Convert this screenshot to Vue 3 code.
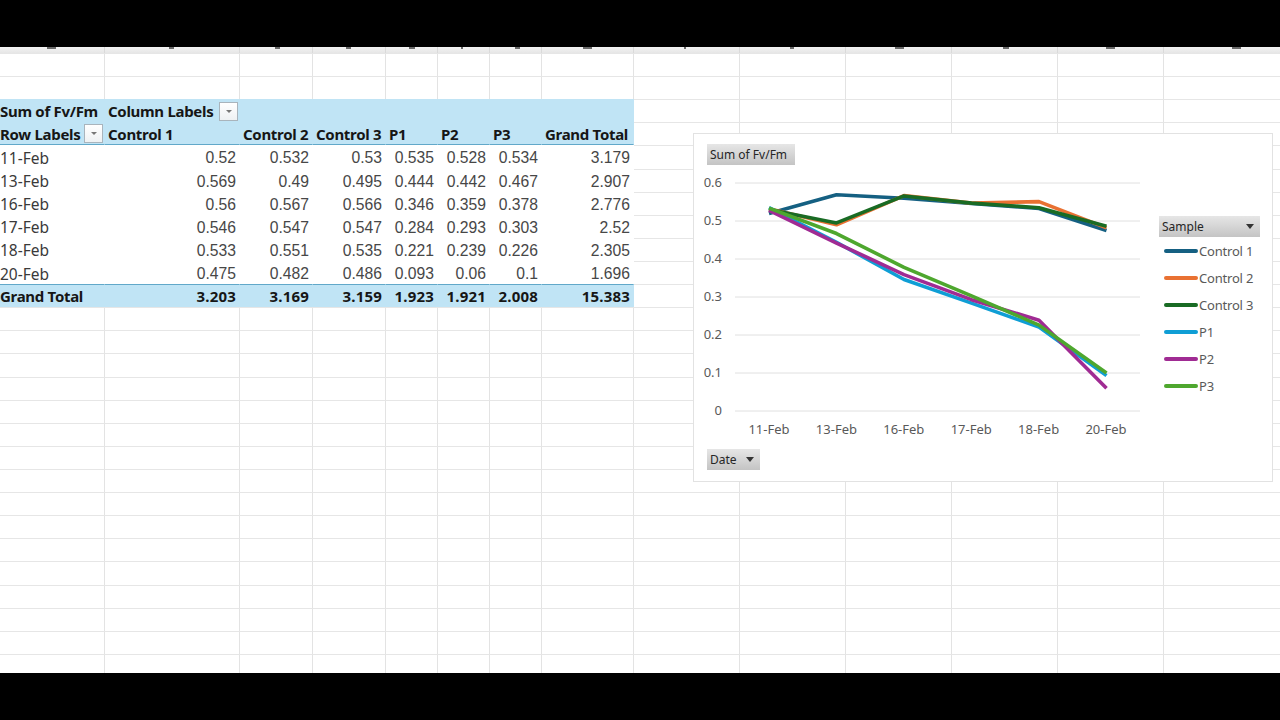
<template>
  <div class="page">
    <header class="band band-top"></header>
    <main class="sheet">
      <i v-for="m in marks" :key="m.x" class="mark" :style="{ left: m.x + 'px', width: m.w + 'px' }"></i>
      <div class="grid">
        <div v-for="c in COLS" :key="'r' + c" class="ruler"></div>
        <template v-for="(row, r) in rows" :key="r">
          <div
            v-for="(cell, c) in row"
            :key="c"
            class="cell"
            :class="cell.cls"
          >
            <span>{{ cell.t }}</span>
            <i v-if="cell.filter" class="filter"><b></b></i>
          </div>
        </template>
      </div>

      <section class="chart">
        <div class="field field-value">Sum of Fv/Fm</div>
        <svg class="plot" width="578" height="347" viewBox="0 0 578 347">
          <g v-for="t in ticks" :key="t.label">
            <line class="gridline" x1="41" x2="446" :y1="t.y" :y2="t.y" />
            <text class="axis" x="28" :y="t.y + 3.5" text-anchor="end">{{ t.label }}</text>
          </g>
          <text v-for="(d, i) in dates" :key="d" class="axis" :x="75 + i * 67.4" y="300" text-anchor="middle">{{ d }}</text>
          <polyline
            v-for="s in series"
            :key="s.name"
            class="line"
            :points="pointsOf(s)"
            :stroke="s.color"
          />
        </svg>
        <div class="field field-date">Date<i class="arrow"></i></div>
        <aside class="legend">
          <div class="field field-sample">Sample<i class="arrow"></i></div>
          <ul>
            <li v-for="s in series" :key="s.name">
              <i class="swatch" :style="{ background: s.color }"></i>{{ s.name }}
            </li>
          </ul>
        </aside>
      </section>
    </main>
    <footer class="band band-bottom"></footer>
  </div>
</template>

<script setup>
const dates = ['11-Feb', '13-Feb', '16-Feb', '17-Feb', '18-Feb', '20-Feb']
const series = [
  { name: 'Control 1', color: '#156082', v: [0.52, 0.569, 0.56, 0.546, 0.533, 0.475] },
  { name: 'Control 2', color: '#e97132', v: [0.532, 0.49, 0.567, 0.547, 0.551, 0.482] },
  { name: 'Control 3', color: '#196b24', v: [0.53, 0.495, 0.566, 0.547, 0.535, 0.486] },
  { name: 'P1', color: '#0f9ed5', v: [0.535, 0.444, 0.346, 0.284, 0.221, 0.093] },
  { name: 'P2', color: '#a02b93', v: [0.528, 0.442, 0.359, 0.293, 0.239, 0.06] },
  { name: 'P3', color: '#4ea72e', v: [0.534, 0.467, 0.378, 0.303, 0.226, 0.1] }
]
const ticks = [0.6, 0.5, 0.4, 0.3, 0.2, 0.1, 0].map((v) => ({
  label: String(v),
  y: 277 - v * 380
}))
const pointsOf = (s) => s.v.map((v, i) => `${75 + i * 67.5},${277 - v * 380}`).join(' ')

const marks = [
  { x: 47, w: 9 }, { x: 169, w: 5 }, { x: 275, w: 5 }, { x: 346, w: 5 }, { x: 409, w: 6 },
  { x: 461, w: 2 }, { x: 515, w: 5 }, { x: 583, w: 9 }, { x: 684, w: 2 }, { x: 790, w: 4 },
  { x: 895, w: 9 }, { x: 1003, w: 6 }, { x: 1106, w: 9 }, { x: 1232, w: 9 }
]

const COLS = 14
const blank = () => ({ t: '', cls: '' })
const emptyRow = () => Array.from({ length: COLS }, blank)
const pad = (cells) => {
  const out = [...cells]
  while (out.length < COLS) out.push(blank())
  return out
}
const head = (t, filter = false) => ({ t, cls: filter ? 'head has-filter' : 'head', filter })
const totals = ['3.203', '3.169', '3.159', '1.923', '1.921', '2.008', '15.383']
const body = [
  ['11-Feb', '0.52', '0.532', '0.53', '0.535', '0.528', '0.534', '3.179'],
  ['13-Feb', '0.569', '0.49', '0.495', '0.444', '0.442', '0.467', '2.907'],
  ['16-Feb', '0.56', '0.567', '0.566', '0.346', '0.359', '0.378', '2.776'],
  ['17-Feb', '0.546', '0.547', '0.547', '0.284', '0.293', '0.303', '2.52'],
  ['18-Feb', '0.533', '0.551', '0.535', '0.221', '0.239', '0.226', '2.305'],
  ['20-Feb', '0.475', '0.482', '0.486', '0.093', '0.06', '0.1', '1.696']
]

const rows = []
rows.push(emptyRow(), emptyRow())
rows.push(pad([
  head('Sum of Fv/Fm'), head('Column Labels', true),
  head(''), head(''), head(''), head(''), head(''), head('')
]))
rows.push(pad([
  { ...head('Row Labels', true), cls: 'head has-filter under' },
  ...['Control 1', 'Control 2', 'Control 3', 'P1', 'P2', 'P3', 'Grand Total'].map((t) => ({ t, cls: 'head under' }))
]))
body.forEach((b) => {
  rows.push(pad(b.map((t, i) => ({ t, cls: i ? 'num' : 'label' }))))
})
rows.push(pad([
  { t: 'Grand Total', cls: 'head total' },
  ...totals.map((t) => ({ t, cls: 'head total right' }))
]))
while (rows.length < 27) rows.push(emptyRow())
</script>

<style>
html, body { margin: 0; background: #fff; }
</style>

<style scoped>
.page {
  width: 1280px;
  height: 720px;
  display: flex;
  flex-direction: column;
  overflow: hidden;
  background: #000;
}
.band { background: #000; flex: none; }
.band-top { height: 47px; }
.band-bottom { height: 47px; }
.sheet {
  position: relative;
  height: 626px;
  background: #fff;
  overflow: hidden;
}
.mark {
  position: absolute;
  top: 0;
  height: 1.5px;
  background: #6a6a6a;
  z-index: 1;
}
.grid {
  display: grid;
  grid-template-columns: 105px 135px 73px 73px 52px 52px 52px 92px 106px 106px 106px 106px 106px 124px;
  grid-template-rows: 6px;
  grid-auto-rows: 23.12px;
  font-family: "Noto Sans", "Liberation Sans", sans-serif;
  font-size: 15px;
  color: #1f1f1f;
}
.ruler {
  background: linear-gradient(#f4f4f4, #e6e6e6);
  border-right: 1px solid #dadada;
}
.cell {
  box-sizing: border-box;
  border-right: 1.5px solid #e3e3e3;
  border-top: 1.5px solid #e6e6e6;
  display: flex;
  align-items: center;
  justify-content: space-between;
  white-space: nowrap;
  padding: 0 3px;
  min-width: 0;
  position: relative;
}
.cell:nth-child(14n + 1) { padding-left: 0; }
.head {
  background: #c0e4f5;
  border-color: #c0e4f5;
  font-weight: 700;
  letter-spacing: -0.3px;
  color: #161616;
}
.has-filter { padding-right: 1px; }
.under { border-bottom: 1.5px solid #61a8c9; }
.total { border-top: 1.5px solid #61a8c9; }
.right { justify-content: flex-end; letter-spacing: 0.2px; }
.label { font-size: 15.5px; color: #3a3a3a; border-color: transparent; padding-top: 1px; }
.num {
  justify-content: flex-end;
  font-family: "Liberation Sans", sans-serif;
  font-size: 15.7px;
  color: #474747;
  border-color: transparent;
  padding-top: 2px;
}
.filter {
  flex: none;
  width: 19px;
  height: 19px;
  box-sizing: border-box;
  background: linear-gradient(#fff, #eef1f3);
  border: 1px solid #a9b4bc;
  display: flex;
  align-items: center;
  justify-content: center;
}
.filter b {
  width: 0;
  height: 0;
  border-left: 3px solid transparent;
  border-right: 3px solid transparent;
  border-top: 3px solid #777;
}
.chart {
  position: absolute;
  left: 694px;
  top: 87px;
  width: 578px;
  height: 347px;
  box-sizing: border-box;
  background: #fff;
  outline: 1.5px solid #e2e2e2;
  z-index: 2;
}
.plot { position: absolute; left: 0; top: 0; display: block; }
.gridline { stroke: #e0e0e0; stroke-width: 1; }
.axis { fill: #595959; font-size: 13px; font-family: "Noto Sans", sans-serif; }
.line { fill: none; stroke-width: 3.6; stroke-linejoin: round; }
.field {
  position: absolute;
  box-sizing: border-box;
  height: 21px;
  background: linear-gradient(#e6e6e6, #c4c4c4);
  color: #262626;
  font-size: 12px;
  font-family: "Noto Sans", sans-serif;
  display: flex;
  align-items: center;
  justify-content: space-between;
  padding: 0 5px 0 3px;
  white-space: nowrap;
  z-index: 1;
}
.field-value { left: 13px; top: 10px; width: 88px; }
.field-date { left: 13px; top: 315px; width: 53px; }
.arrow {
  flex: none;
  width: 0;
  height: 0;
  margin-right: 1px;
  border-left: 4.5px solid transparent;
  border-right: 4.5px solid transparent;
  border-top: 5px solid #333;
}
.legend { position: absolute; left: 465px; top: 82px; width: 101px; }
.field-sample { position: static; width: 101px; }
.legend ul { list-style: none; margin: 1px 0 0; padding: 0; }
.legend li {
  height: 26.9px;
  display: flex;
  align-items: center;
  font-size: 13px;
  font-family: "Noto Sans", sans-serif;
  color: #595959;
  letter-spacing: -0.2px;
}
.swatch {
  flex: none;
  width: 34px;
  height: 4px;
  border-radius: 2px;
  margin: 0 1px 0 5px;
}
</style>
